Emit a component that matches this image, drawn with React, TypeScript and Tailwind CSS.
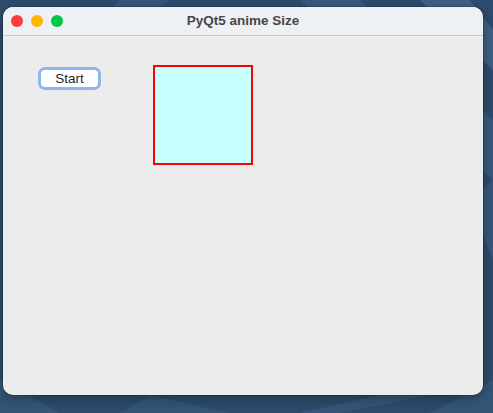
import React from "react";

export default function App() {
  return (
    <div className="relative w-[493px] h-[413px] overflow-hidden bg-[#2d4b6c]" style={{ fontFamily: '"Liberation Sans", Arial, sans-serif' }}>
      <svg className="absolute inset-0" width="493" height="413" viewBox="0 0 493 413">
        <path d="M300 0 L360 0 L493 120 L493 180 Z" fill="#3f6186" opacity="0.6" />
        <path d="M420 0 L470 0 L493 30 L493 70 Z" fill="#4a6d93" opacity="0.6" />
        <path d="M120 0 L170 0 L140 20 L100 20 Z" fill="#3f6186" opacity="0.5" />
        <path d="M0 380 L60 413 L0 413 Z" fill="#3a5b7e" opacity="0.6" />
        <path d="M150 395 L230 413 L120 413 Z" fill="#3c5d80" opacity="0.5" />
        <path d="M300 413 L380 395 L430 395 L340 413 Z" fill="#3f6186" opacity="0.5" />
        <path d="M430 413 L493 380 L493 413 Z" fill="#3a5b7e" opacity="0.6" />
        <path d="M470 200 L493 180 L493 260 Z" fill="#3f6186" opacity="0.5" />
      </svg>
      <div className="relative pt-[7px] pl-[3px]">
        <div className="w-[480px] h-[388px] rounded-[10px] overflow-hidden flex flex-col bg-[#ececec] shadow-[0_0_0_1px_rgba(0,0,0,0.15),0_4px_12px_rgba(0,0,0,0.3)]">
          <div className="relative h-[29px] shrink-0 bg-[#eef1f4] border-b border-[#c9c9c9] flex items-center pl-[8px] gap-[8px]">
            <div className="w-[12px] h-[12px] rounded-full bg-[#ff3b3b]" />
            <div className="w-[12px] h-[12px] rounded-full bg-[#fcb500]" />
            <div className="w-[12px] h-[12px] rounded-full bg-[#00c845]" />
            <div className="absolute inset-0 flex items-center justify-center text-[13.5px] font-bold text-[#474747]">
              PyQt5 anime Size
            </div>
          </div>
          <div className="flex items-start pt-[29px] pl-[35px]">
            <div className="mt-[2px] w-[63px] h-[23px] rounded-[7px] bg-[#8fb4ee] p-[3px]">
              <button className="w-full h-full rounded-[4px] bg-white text-[13.5px] text-[#1f1f1f] leading-none flex items-center justify-center">
                Start
              </button>
            </div>
            <div className="ml-[52px] w-[100px] h-[100px] border-2 border-[#ff0000] bg-[#c8ffff]" />
          </div>
        </div>
      </div>
    </div>
  );
}
